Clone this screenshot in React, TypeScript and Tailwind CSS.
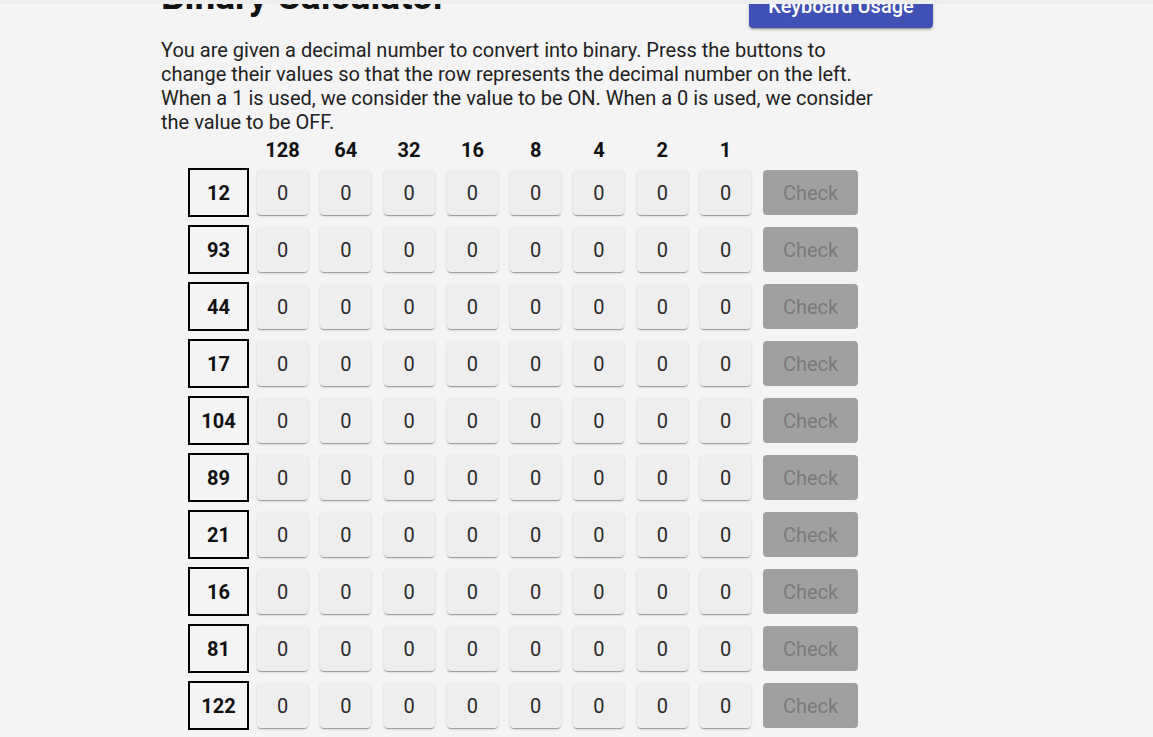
import React from 'react'

// ─── Data ───────────────────────────────────────────────────────────────────
const bits = [128, 64, 32, 16, 8, 4, 2, 1]
const targets = [12, 93, 44, 17, 104, 89, 21, 16, 81, 122]

// ─── Row ────────────────────────────────────────────────────────────────────
const BinaryRow: React.FC<{ target: number }> = ({ target }) => {
  const [values, setValues] = React.useState<number[]>(() => bits.map(() => 0))

  const toggle = (i: number) =>
    setValues((prev) => prev.map((v, j) => (j === i ? (v ? 0 : 1) : v)))

  return (
    <div className="flex items-center h-[49px] mb-[8px]">
      <div className="w-[61px] h-[49px] border-2 border-black flex items-center justify-center font-bold text-[20px] text-[#111] mr-[8px]">
        {target}
      </div>
      <div className="flex gap-[12.3px]">
        {values.map((v, i) => (
          <button
            key={i}
            onClick={() => toggle(i)}
            className="w-[51px] h-[45px] rounded-[4px] bg-[#eeeeee] text-[20px] text-[#2a2a2a] shadow-[0_2px_1px_-1px_rgba(0,0,0,0.2),0_1px_1px_0_rgba(0,0,0,0.14),0_1px_3px_0_rgba(0,0,0,0.12)]"
          >
            {v}
          </button>
        ))}
      </div>
      <button
        disabled
        className="ml-[12px] w-[95px] h-[45px] rounded-[4px] bg-[#a0a0a0] text-[20px] text-[#7a7a7a]"
      >
        Check
      </button>
    </div>
  )
}

// ─── Page ───────────────────────────────────────────────────────────────────
export default function App() {
  return (
    <div className="relative min-h-screen overflow-hidden bg-[#f4f4f4] font-['Roboto','Liberation_Sans',sans-serif] text-[#222]">
      {/* top bar peeking in over the scrolled content */}
      <div className="fixed top-0 left-0 right-0 h-[4px] bg-[#eeeeee] z-10" />

      <div className="ml-[161px] w-[772px] -mt-[30px]">
        <div className="flex justify-between items-start h-[58px]">
          <h1 className="mt-[5px] text-[37px] font-bold leading-[44px] text-[#111]">Binary Calculator</h1>
          <button className="mt-[14px] w-[184px] h-[44px] rounded-[4px] bg-[#3f51b5] text-white text-[20px] font-medium shadow-[0_3px_1px_-2px_rgba(0,0,0,0.2),0_2px_2px_0_rgba(0,0,0,0.14),0_1px_5px_0_rgba(0,0,0,0.12)]">
            Keyboard Usage
          </button>
        </div>

        <p className="mt-[10px] w-[720px] text-[20px] leading-[24px]">
          You are given a decimal number to convert into binary. Press the buttons to change their
          values so that the row represents the decimal number on the left. When a 1 is used, we
          consider the value to be ON. When a 0 is used, we consider the value to be OFF.
        </p>

        <div className="ml-[27px] mt-[4px]">
          <div className="flex h-[24px] mb-[6px] pl-[69px] gap-[12.3px]">
            {bits.map((b) => (
              <div key={b} className="w-[51px] text-center font-bold text-[20px] leading-[24px] text-[#111]">
                {b}
              </div>
            ))}
          </div>
          {targets.map((t, i) => (
            <BinaryRow key={i} target={t} />
          ))}
        </div>
      </div>
    </div>
  )
}
